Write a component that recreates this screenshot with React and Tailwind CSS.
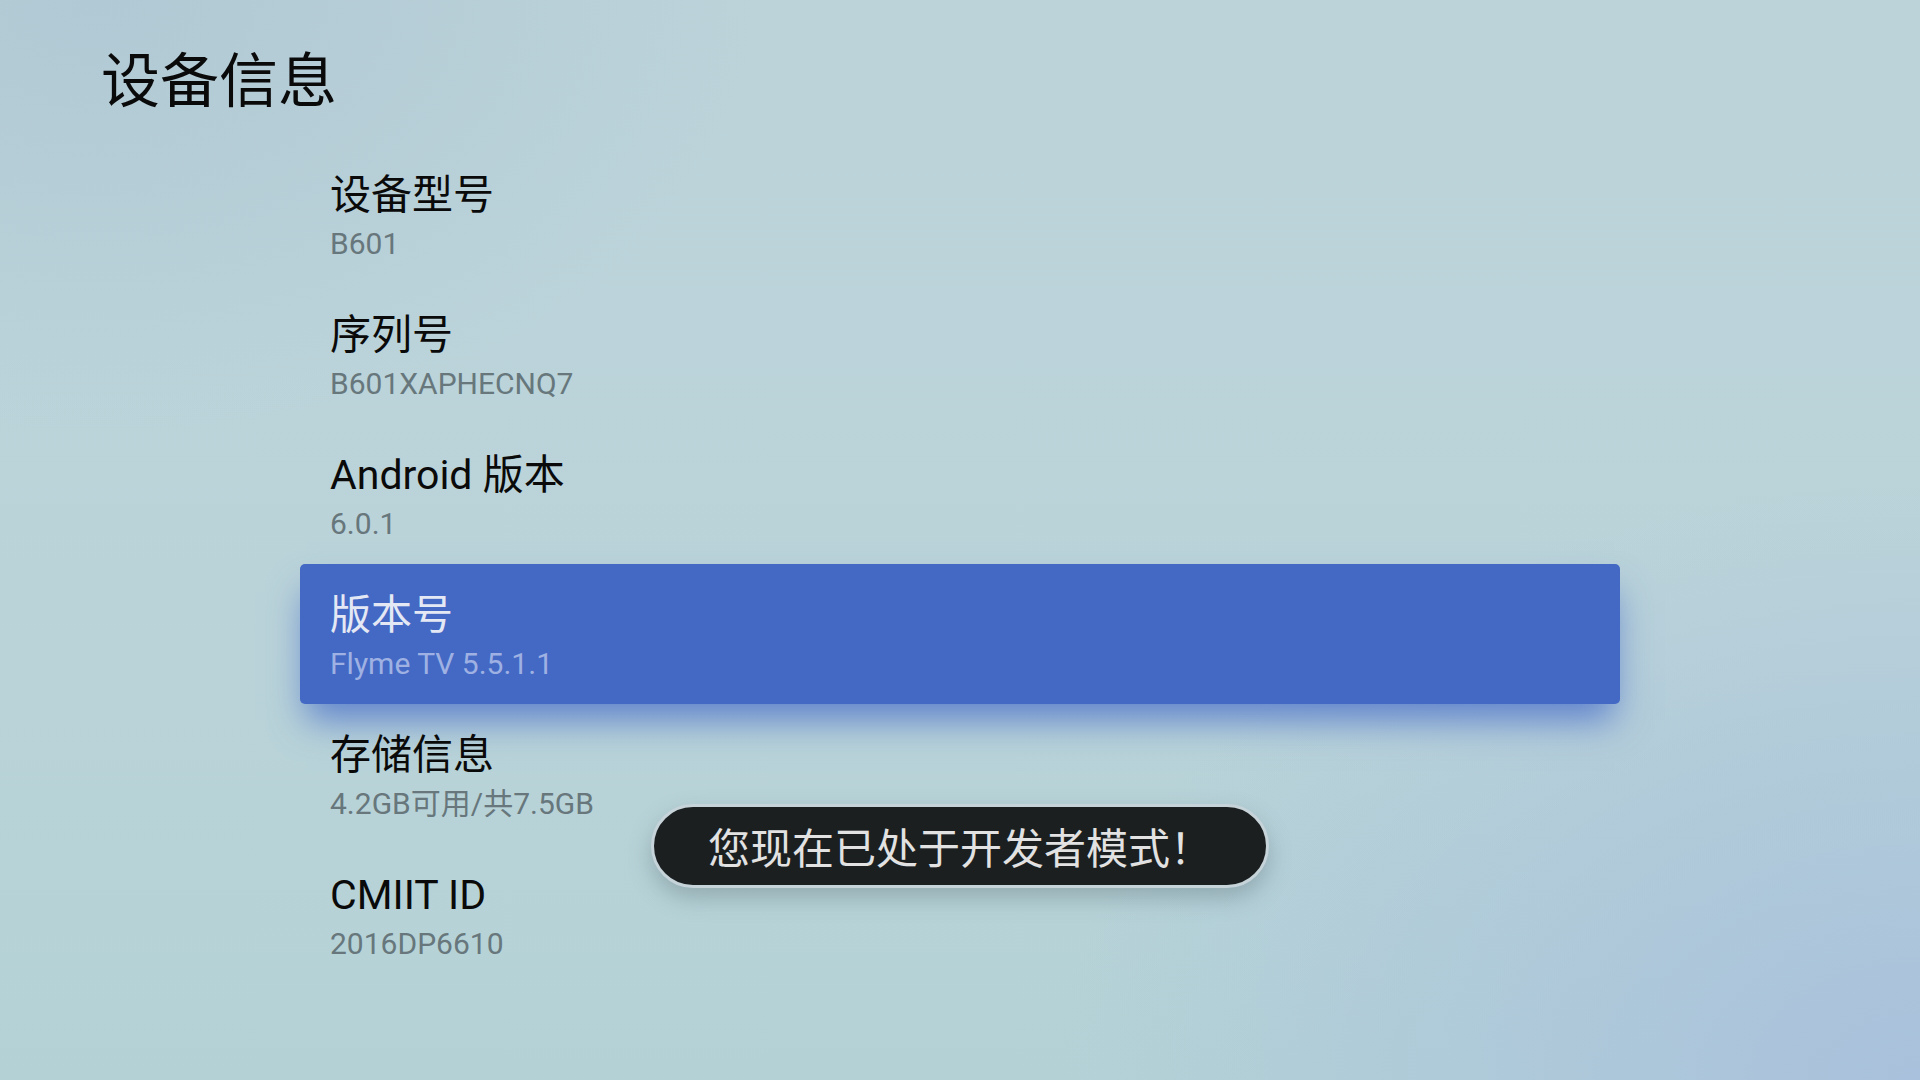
import React from "react";

const items = [
  { t: "设备型号", s: "B601" },
  { t: "序列号", s: "B601XAPHECNQ7" },
  { t: "Android 版本", s: "6.0.1" },
  { t: "版本号", s: "Flyme TV 5.5.1.1", sel: true },
  { t: "存储信息", s: "4.2GB可用/共7.5GB" },
  { t: "CMIIT ID", s: "2016DP6610" },
];

export default function App() {
  return (
    <div className="relative w-[1920px] h-[1080px] overflow-hidden bg-[radial-gradient(ellipse_45%_55%_at_100%_100%,#a9c1dc_0%,rgba(169,193,220,0)_100%),radial-gradient(ellipse_35%_40%_at_5%_0%,#b1c9d4_0%,rgba(177,201,212,0)_100%),linear-gradient(180deg,#bcd3da_0%,#bad3d9_60%,#b4d2d6_100%)] font-['Roboto','Noto_Sans_CJK_SC',sans-serif]">
      <div className="pl-[101px] pt-[45px] text-[59px] leading-[74px] text-[#0a0a0a]">设备信息</div>
      <div className="ml-[300px] mt-[25px] w-[1320px] flex flex-col">
        {items.map((it) => (
          <div
            key={it.t}
            className={
              it.sel
                ? "h-[140px] px-[30px] pt-[7px] flex flex-col justify-center gap-[5px] rounded-[5px] bg-[#4369c5] shadow-[0_22px_34px_-6px_rgba(66,104,200,0.75)]"
                : "h-[140px] px-[30px] pt-[7px] flex flex-col justify-center gap-[5px]"
            }
          >
            <div
              className={
                it.sel
                  ? "text-[41px] leading-[48px] text-[#e4e8f4]"
                  : "text-[41px] leading-[48px] text-[#0a0a0a]"
              }
            >
              {it.t}
            </div>
            <div
              className={
                it.sel
                  ? "text-[30px] leading-[40px] text-[#9fb1e2]"
                  : "text-[30px] leading-[40px] text-[#67777c]"
              }
            >
              {it.s}
            </div>
          </div>
        ))}
      </div>
      <div className="absolute left-[651px] top-[804px] w-[618px] h-[84px] rounded-full bg-[#1b1f20] border-[3px] border-[#c6d3d9] shadow-[0_10px_22px_rgba(80,100,110,0.35)] flex items-center justify-center">
        <span className="text-[42px] leading-none text-[#e2e2e2] font-['Noto_Sans_CJK_SC',sans-serif]">您现在已处于开发者模式！</span>
      </div>
    </div>
  );
}
